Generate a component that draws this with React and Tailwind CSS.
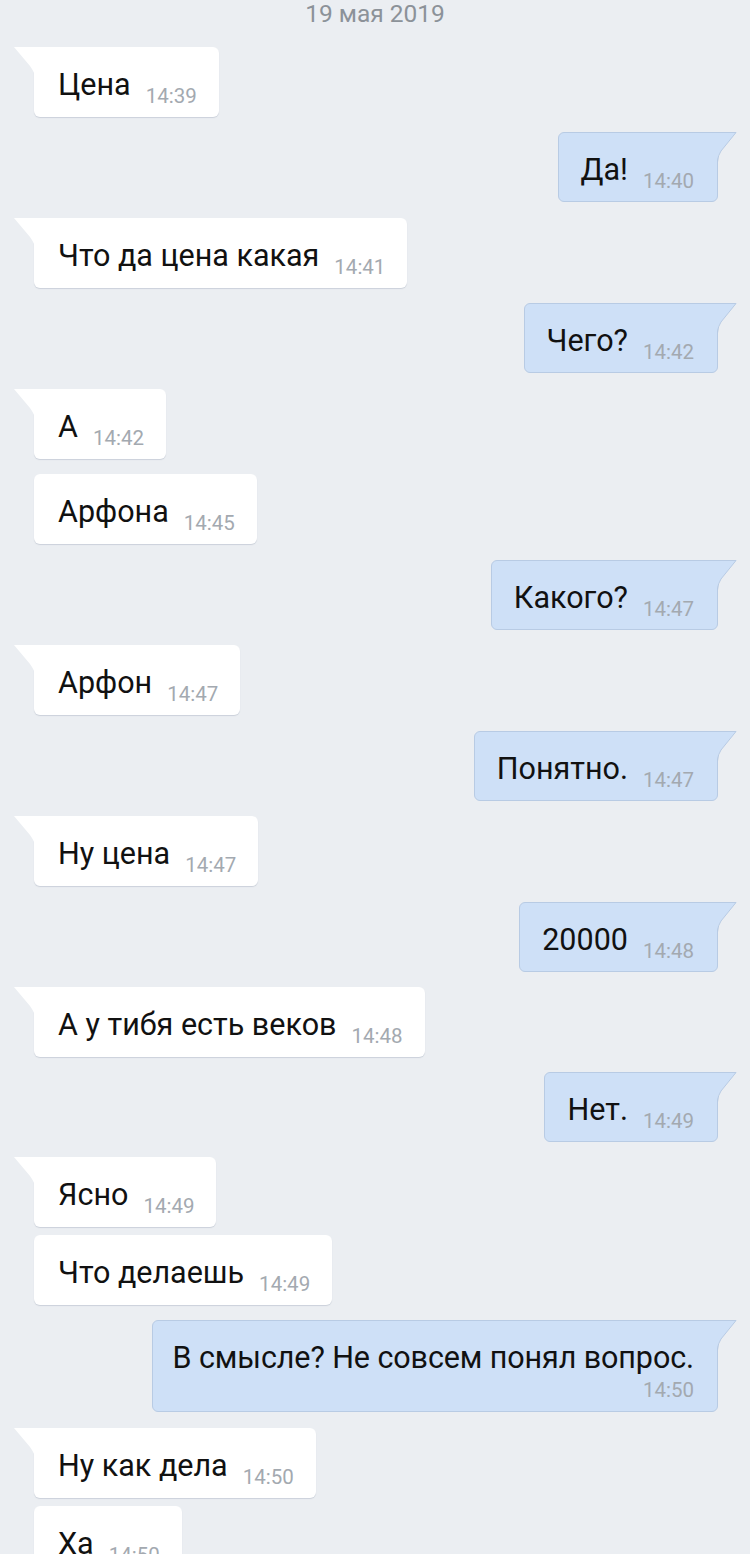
import React from "react";

const msgs = [
  { t: "Цена", time: "14:39", out: false, tail: true, mt: "" },
  { t: "Да!", time: "14:40", out: true, tail: true, mt: "mt-[15px]" },
  { t: "Что да цена какая", time: "14:41", out: false, tail: true, mt: "mt-[16px]" },
  { t: "Чего?", time: "14:42", out: true, tail: true, mt: "mt-[15px]" },
  { t: "А", time: "14:42", out: false, tail: true, mt: "mt-[16px]" },
  { t: "Арфона", time: "14:45", out: false, tail: false, mt: "mt-[15px]" },
  { t: "Какого?", time: "14:47", out: true, tail: true, mt: "mt-[16px]" },
  { t: "Арфон", time: "14:47", out: false, tail: true, mt: "mt-[15px]" },
  { t: "Понятно.", time: "14:47", out: true, tail: true, mt: "mt-[16px]" },
  { t: "Ну цена", time: "14:47", out: false, tail: true, mt: "mt-[15px]" },
  { t: "20000", time: "14:48", out: true, tail: true, mt: "mt-[16px]" },
  { t: "А у тибя есть веков", time: "14:48", out: false, tail: true, mt: "mt-[15px]" },
  { t: "Нет.", time: "14:49", out: true, tail: true, mt: "mt-[15px]" },
  { t: "Ясно", time: "14:49", out: false, tail: true, mt: "mt-[15px]" },
  { t: "Что делаешь", time: "14:49", out: false, tail: false, mt: "mt-[8px]" },
  { t: "В смысле? Не совсем понял вопрос.", time: "14:50", out: true, tail: true, long: true, mt: "mt-[15px]" },
  { t: "Ну как дела", time: "14:50", out: false, tail: true, mt: "mt-[16px]" },
  { t: "Ха", time: "14:50", out: false, tail: false, mt: "mt-[8px]" },
];

function InTail() {
  return (
    <svg className="absolute left-[-20px] top-0" width="21" height="30" viewBox="0 0 21 30">
      <path d="M0 0 H21 V28 Q19 23 16 19 L0 0 Z" fill="#ffffff" />
    </svg>
  );
}

function OutTail() {
  return (
    <svg className="absolute right-[-20px] top-[-1px]" width="21" height="31" viewBox="0 0 21 31">
      <path d="M0 0 H20.5 L5 19 Q2 23 1 29 L0 29 Z" fill="#cee0f7" />
      <path d="M0 0.5 H20 L5 19 Q2 23 1.5 30" fill="none" stroke="#b8cbe4" strokeWidth="1" />
    </svg>
  );
}

const TEXT = "text-[30.5px] leading-[30.5px] text-[#111] whitespace-nowrap";
const TIME = "text-[20.5px] leading-[20.5px] text-[#a3a9b0] whitespace-nowrap";

function Bubble({ m }) {
  if (m.out) {
    if (m.long) {
      return (
        <div className={`flex justify-end pr-[32px] ${m.mt}`}>
          <div className="relative h-[92px] bg-[#cee0f7] border border-[#b8cbe4] rounded-[6px] rounded-tr-none pl-[20px] pr-[23px] flex flex-col items-end">
            <OutTail />
            <div className={`${TEXT} mt-[22px] tracking-[-0.1px]`}>{m.t}</div>
            <div className={`${TIME} mt-[6px]`}>{m.time}</div>
          </div>
        </div>
      );
    }
    return (
      <div className={`flex justify-end pr-[32px] ${m.mt}`}>
        <div className="relative h-[70px] bg-[#cee0f7] border border-[#b8cbe4] rounded-[6px] rounded-tr-none pl-[22px] pr-[23px] flex items-start gap-[15px]">
          <OutTail />
          <div className={`${TEXT} mt-[22px]`}>{m.t}</div>
          <div className={`${TIME} mt-[38px]`}>{m.time}</div>
        </div>
      </div>
    );
  }
  return (
    <div className={`flex justify-start pl-[34px] ${m.mt}`}>
      <div
        className={`relative h-[70px] bg-white rounded-[6px] ${m.tail ? "rounded-tl-none" : ""} shadow-[0_1px_1px_rgba(60,80,110,0.18)] pl-[24px] pr-[22px] flex items-start gap-[15px]`}
      >
        {m.tail && <InTail />}
        <div className={`${TEXT} mt-[23px]`}>{m.t}</div>
        <div className={`${TIME} mt-[39px]`}>{m.time}</div>
      </div>
    </div>
  );
}

export default function App() {
  return (
    <div
      className="w-[750px] h-[1554px] overflow-hidden bg-[#ebeef2]"
      style={{ fontFamily: "Roboto, 'Noto Sans', sans-serif" }}
    >
      <div className="h-[47px] flex justify-center">
        <div className="text-[24.5px] leading-[24.5px] text-[#8c9299] mt-[2px]">19 мая 2019</div>
      </div>
      <div className="flex flex-col">
        {msgs.map((m, i) => (
          <Bubble key={i} m={m} />
        ))}
      </div>
    </div>
  );
}
